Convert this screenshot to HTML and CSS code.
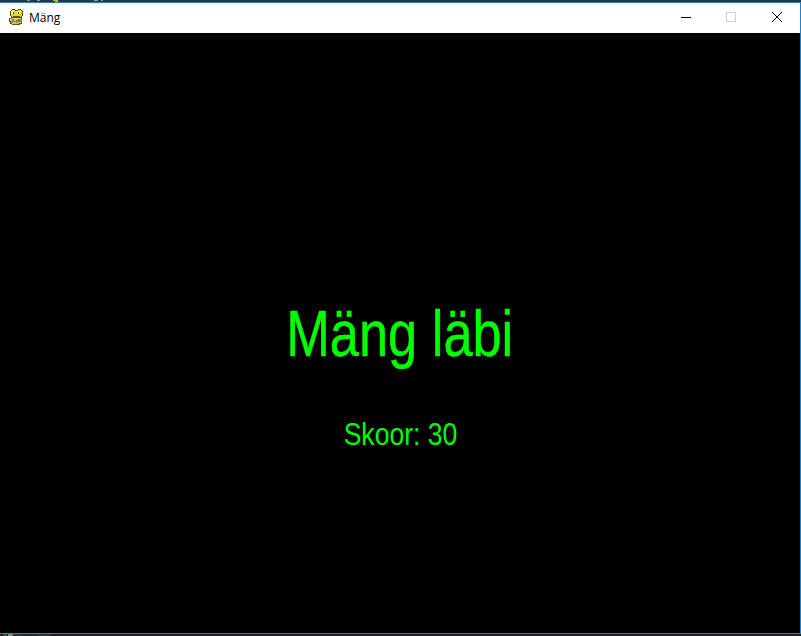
FILE: index.html
```html
<!DOCTYPE html>
<html lang="et">
<head>
<meta charset="utf-8">
<title>Mäng</title>
<link rel="stylesheet" href="styles.css">
</head>
<body>
<svg class="strip" width="801" height="2" shape-rendering="crispEdges"><path fill="#9a9a9a" d="M27 0h3v1h-3zM37 0h3v1h-3zM94 0h4v1h-4zM101 0h2v1h-2z"/><path fill="#d4b520" d="M53 0h5v1h-5zM55 1h3v1h-3z"/></svg>
<main class="window">
  <header class="titlebar">
    <svg class="snake" width="16" height="18" viewBox="0 0 16 18" shape-rendering="crispEdges">
      <path fill="#5b5222" d="M4 1h3v1h3V1h3v1h1v1h1v5h-1v8h-2v1H4v-1H2v-2H1v-4h2V8H2V3h1V2h1z"/>
      <path fill="#ead52b" d="M4 2h3v1h3V2h3v1h1v5h-1v1H4V8H3V3h1zM4 10h9v5H4z"/>
      <path fill="#f3f1e4" d="M3 3h3v3H3zM9 3h3v3H9z"/>
      <path fill="#55502c" d="M5 4h1v2H5zM10 4h1v2h-1zM5 8h7v1H5z"/>
      <path fill="#858378" d="M2 10h2v1h4v1h2v-1h4v3h-4v1H8v-1H5v1H3v-2H2z"/>
      <path fill="#c9c6b8" d="M2 11h2v2H2zM6 11h2v2H6z"/>
      <path fill="#a94b38" d="M10 12h2v1h-2z"/>
      <path fill="#d8bf22" d="M4 14h2v1h3v-1h3v1h-1v1H4z"/>
    </svg>
    <span class="title">Mäng</span>
    <div class="controls">
      <svg width="46" height="30" shape-rendering="crispEdges"><path fill="#000" d="M18 14h10v1H18z"/></svg>
      <svg width="46" height="30"><path fill="none" stroke="#ccc" d="M17.5 9.5h9v9h-9z"/></svg>
      <svg width="46" height="30"><path fill="none" stroke="#000" d="M17 9l10 10M27 9L17 19"/></svg>
    </div>
  </header>
  <section class="game">
    <h1 class="heading">Mäng läbi</h1>
    <p class="score">Skoor: 30</p>
  </section>
</main>
<svg class="strip" width="801" height="2" shape-rendering="crispEdges"><path fill="#2c6b3c" d="M3 0h4v2H5V1H3z"/><path fill="#85858a" d="M8 0h5v2H8zM36 0h2v1h-2z"/><path fill="#30303a" d="M14 0h8v2h-8zM23 0h28v2H38V1H23z"/></svg>
</body>
</html>
```

FILE: styles.css
```css
* { box-sizing: border-box; }

body {
  margin: 0;
  width: 801px;
  height: 636px;
  overflow: hidden;
  background: #202124;
}

.strip {
  display: block;
  background: #303337;
}

.strip:last-child { background: #202024; }

.window {
  height: 632px;
  border: 1px solid #1883d7;
  border-left: 0;
  background: #000;
}

.titlebar {
  display: flex;
  align-items: center;
  height: 30px;
  padding-left: 8px;
  background: #fff;
}

.snake { flex: none; margin-top: -2px; }

.title {
  margin-left: 5px;
  font: 12px/16px "Open Sans", "Noto Sans", sans-serif;
  color: #000;
}

.controls {
  display: flex;
  margin: 0 -1px 0 auto;
}

.game {
  display: flex;
  flex-direction: column;
  align-items: center;
  height: 600px;
  padding-top: 264px;
  color: #0f0;
  font-family: "Liberation Sans", Arial, sans-serif;
}

.heading, .score {
  margin: 0;
  font-weight: 400;
  white-space: nowrap;
}

.heading {
  font-size: 64px;
  line-height: 74px;
  transform: scaleX(.818);
  -webkit-text-stroke: .5px #0f0;
}

.score {
  margin-top: 44px;
  font-size: 32px;
  line-height: 38px;
  transform: scaleX(.83);
}
```
